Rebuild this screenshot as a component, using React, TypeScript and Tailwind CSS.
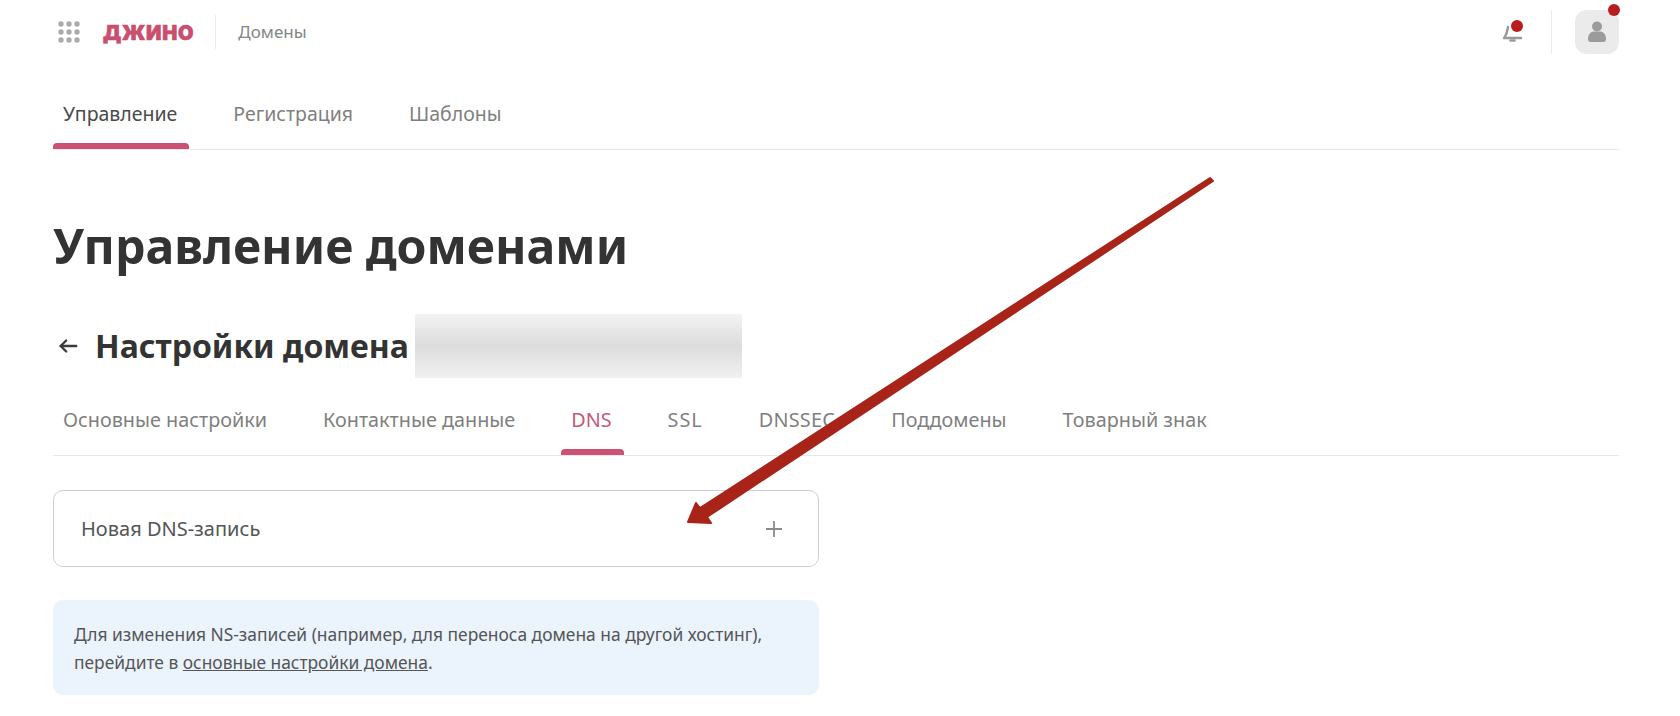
import React from "react";

function GridDots() {
  const pts = [0, 1, 2];
  return (
    <svg width="24" height="24" viewBox="0 0 24 24" className="block">
      {pts.map((r) =>
        pts.map((c) => <circle key={`${r}-${c}`} cx={4 + c * 8} cy={4 + r * 8} r="2.7" fill="#ababab" />)
      )}
    </svg>
  );
}

function Tab({ label, active, pink, wide, mid }: { label: string; active?: boolean; pink?: boolean; wide?: boolean; mid?: boolean }) {
  const color = pink ? "text-[#c4597a]" : active ? "text-[#4a4a4a]" : "text-[#7f7f7f]";
  const spacing = wide ? "tracking-[1px]" : mid ? "tracking-[0.3px]" : "";
  return (
    <div className="relative h-full flex items-center pl-[10px] pr-[12px]">
      <span className={"mb-[2px] " + color + " " + spacing}>{label}</span>
      {active && <div className="absolute left-0 right-0 bottom-0 h-[6px] rounded-t-[4px] bg-[#cc5274]" />}
    </div>
  );
}

export default function App() {
  return (
    <div className="relative w-[1680px] h-[716px] overflow-hidden bg-white font-['Noto_Sans',sans-serif] text-[#3b3b3b]">
      <div className="flex flex-col pl-[53px] pr-[61px]">
        <header className="h-[64px] flex items-center">
          <div className="ml-[4px]"><GridDots /></div>
          <span className="ml-[22px] mt-[2px] font-['Inter',sans-serif] font-black text-[20px] tracking-[0.8px] text-[#c94f6f] [-webkit-text-stroke:0.6px_#c94f6f]">ДЖИНО</span>
          <div className="ml-[21px] w-px h-[34px] bg-[#ececec]" />
          <span className="ml-[22px] text-[17px] text-[#858585]">Домены</span>
          <div className="ml-auto flex items-center">
            <div className="relative w-[24px] h-[24px]">
              <svg width="24" height="24" viewBox="0 0 24 24" fill="none" stroke="#999" strokeWidth="2.4" strokeLinecap="round" strokeLinejoin="round">
                <path d="M7 7C6.500 10 6 13 4.500 15.500L3 18H20" />
                <path d="M9.500 20.500h4" />
              </svg>
              <div className="absolute left-[10px] top-[0px] w-[12px] h-[12px] rounded-full bg-[#b91c1c]" />
            </div>
            <div className="ml-[26px] w-px h-[44px] bg-[#ececec]" />
            <div className="relative ml-[23px] w-[44px] h-[44px] rounded-[12px] bg-[#ebebeb] flex items-center justify-center">
              <svg width="22" height="24" viewBox="0 0 22 24" fill="#9b9b9b">
                <circle cx="11" cy="6.500" r="5" />
                <path d="M2 19c0-5 3-7.500 6-7.500h6c3 0 6 2.500 6 7.500 0 2-1 3-3 3H5c-2 0-3-1-3-3z" />
              </svg>
              <div className="absolute -right-[1px] -top-[6px] w-[12px] h-[12px] rounded-full bg-[#b91c1c]" />
            </div>
          </div>
        </header>

        <nav className="mt-[16px] h-[70px] flex items-center gap-[34px] border-b border-[#e8e8e8] text-[19.5px]">
          <Tab label="Управление" active />
          <Tab label="Регистрация" />
          <Tab label="Шаблоны" />
        </nav>

        <h1 className="mt-[65px] h-[60px] flex items-center text-[48.2px] font-bold leading-none text-[#333]">Управление доменами</h1>

        <div className="mt-[39px] h-[64px] flex items-center">
          <svg width="22" height="22" viewBox="0 0 24 24" fill="none" stroke="#3b3b3b" strokeWidth="2.600" strokeLinecap="round" strokeLinejoin="round" className="ml-[4px]">
            <path d="M21 12H4" />
            <path d="M10 6l-6 6 6 6" />
          </svg>
          <span className="ml-[16px] text-[32px] font-bold leading-none text-[#333]">Настройки домена</span>
          <div className="ml-[6px] w-[327px] h-[64px] bg-gradient-to-b from-[#f3f3f3] via-[#dcdcdc] to-[#f1f1f1]" />
        </div>

        <nav className="mt-[9px] h-[69px] flex items-center gap-[34px] border-b border-[#e8e8e8] text-[19.8px] text-[#555]">
          <Tab label="Основные настройки" />
          <Tab label="Контактные данные" />
          <Tab label="DNS" active pink />
          <Tab label="SSL" wide />
          <Tab label="DNSSEC" mid />
          <Tab label="Поддомены" />
          <Tab label="Товарный знак" />
        </nav>

        <div className="mt-[34px] w-[766px] h-[77px] rounded-[10px] border border-[#cfcfcf] flex items-center justify-between pl-[27px] pr-[34px]">
          <span className="text-[20px] text-[#555]">Новая DNS-запись</span>
          <svg width="20" height="20" viewBox="0 0 20 20" stroke="#8a8a8a" strokeWidth="1.8">
            <path d="M10 2v16M2 10h16" />
          </svg>
        </div>

        <div className="mt-[33px] w-[766px] h-[95px] rounded-[10px] bg-[#ebf4fd] px-[21px] pt-[20px] text-[17.4px] leading-[28px] text-[#555]">
          Для изменения NS-записей (например, для переноса домена на другой хостинг),
          <br />
          перейдите в <span className="underline">основные настройки домена</span>.
        </div>
      </div>

      <svg className="absolute inset-0 pointer-events-none" width="1680" height="716" viewBox="0 0 1680 716">
        <polygon
          points="1210,178 1213,181 707,517 711,523 688,522 696,503 700,508"
          fill="#a92418"
          stroke="#a92418"
          strokeWidth="2"
          strokeLinejoin="round"
        />
      </svg>
    </div>
  );
}
